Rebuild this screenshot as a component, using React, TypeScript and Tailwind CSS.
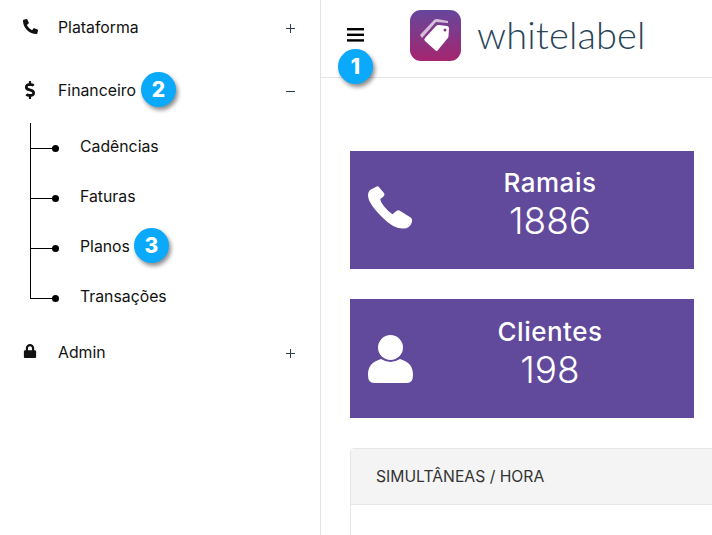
import { FaDollarSign, FaLock, FaPhoneAlt } from "react-icons/fa";
import { ReactNode } from "react";

function Badge({ n, className }: { n: number; className: string }) {
  return (
    <span
      className={`absolute flex h-[35px] w-[35px] items-center justify-center rounded-full bg-[#0aa9fb] text-[21px] font-extrabold text-white shadow-[2px_3px_4px_rgba(0,0,0,0.45)] ${className}`}
    >
      {n}
    </span>
  );
}

function MenuRow({ icon, label, open, children }: { icon: ReactNode; label: string; open?: boolean; children?: ReactNode }) {
  return (
    <div className="relative flex h-[54px] items-center text-[15.8px] text-[#111]">
      <span className="-mr-[2px] flex w-[60px] justify-center">{icon}</span>
      <span className="pt-[2px]">{label}</span>
      {children}
      <svg width="9" height="9" viewBox="0 0 9 9" className="absolute left-[286px] top-[24px]" stroke="#2b3a55" strokeWidth="1">
        <path d="M0 4.500 H9" />
        {!open && <path d="M4.500 0 V9" />}
      </svg>
    </div>
  );
}

function SubItem({ label, last, children }: { label: string; last?: boolean; children?: ReactNode }) {
  return (
    <div className="relative flex h-[50px] items-center pb-[2px] pl-[80px] text-[15.8px] text-[#111]">
      <span className={`absolute left-[30px] top-0 w-px bg-black ${last ? "h-[26px]" : "h-full"}`} />
      <span className="absolute left-[30px] top-[25px] h-px w-[25px] bg-black" />
      <span className="absolute left-[52px] top-[22px] h-[7px] w-[7px] rounded-full bg-black" />
      {label}
      {children}
    </div>
  );
}

function StatCard({ icon, title, value, tall }: { icon: ReactNode; title: string; value: string; tall?: boolean }) {
  return (
    <div className={`flex w-[344px] items-center bg-[#61499b] pl-[18px] pr-[7px] text-white ${tall ? "h-[119px]" : "h-[118px]"}`}>
      <span className="flex h-[45px] w-[45px] shrink-0 items-center justify-center">{icon}</span>
      <div className="flex-1 pb-[6px] text-center">
        <div className="text-[26px] font-medium leading-[28px] tracking-[0.5px]">{title}</div>
        <div className="text-[37px] font-light leading-[48px]">{value}</div>
      </div>
    </div>
  );
}

export default function App() {
  return (
    <div className="flex h-[535px] w-[712px] overflow-hidden bg-white font-['Inter','Liberation_Sans',sans-serif]">
      <aside className="w-[321px] shrink-0 border-r border-[#e4e4e4]">
        <MenuRow icon={<FaPhoneAlt size={15} className="-mt-[2px] text-[#111]" />} label="Plataforma" />
        <div className="mt-[9px]">
          <MenuRow icon={<FaDollarSign size={18} className="text-[#111]" />} label="Financeiro" open>
            <Badge n={2} className="left-[141px] top-[9px]" />
          </MenuRow>
        </div>
        <div className="mt-[6px]">
          <SubItem label="Cadências" />
          <SubItem label="Faturas" />
          <SubItem label="Planos">
            <Badge n={3} className="left-[134px] top-[5px]" />
          </SubItem>
          <SubItem label="Transações" last />
        </div>
        <div className="mt-[2px]">
          <MenuRow icon={<FaLock size={14} className="-mt-[2px] text-[#111]" />} label="Admin" />
        </div>
      </aside>

      <main className="min-w-0 flex-1">
        <header className="relative flex h-[78px] items-start border-b border-[#e6e6e6] pl-[26px]">
          <svg width="18" height="14" viewBox="0 0 18 14" className="mt-[28px]">
            <rect x="0" y="0" width="17" height="2.4" fill="#000" />
            <rect x="0" y="5.6" width="17" height="2.4" fill="#000" />
            <rect x="0" y="11.2" width="17" height="2.4" fill="#000" />
          </svg>
          <Badge n={1} className="left-[17px] top-[49px]" />
          <svg width="52" height="52" viewBox="0 0 52 52" className="ml-[45px] mt-[10px]">
            <defs>
              <linearGradient id="tile" x1="0" y1="0" x2="0" y2="1">
                <stop offset="0" stopColor="#66479c" />
                <stop offset="1" stopColor="#a5256f" />
              </linearGradient>
            </defs>
            <rect width="51" height="51" rx="11" fill="url(#tile)" />
            <path d="M10 25 L24 10 Q25 9 27 9 L38 11 L38 13 L26 12 L12 28 Z" fill="#e8d6ea" opacity="0.85" />
            <path d="M15 28 L26 16 Q27 15 29 15 L37 16 Q39 16.500 39 18 L38.500 26 Q38.500 28 37 29 L28 40 Q26.500 42 25 40 L15 31 Q13.500 29.500 15 28 Z" fill="#fff" />
            <circle cx="35" cy="20" r="1.5" fill="#8a3487" />
          </svg>
          <span className="ml-[15px] mt-[9px] font-['Lato',sans-serif] text-[38px] font-light leading-[50px] tracking-[0.15px] text-[#2a4458]">
            whitelabel
          </span>
        </header>

        <div className="flex flex-col gap-[30px] pl-[29px] pt-[73px]">
          <StatCard
            icon={
              <svg width="46" height="45" viewBox="0 0 46 45" fill="#fff" className="-mt-[6px]">
                <path d="M3 4 L9 1 Q10.500 0.500 11.500 2 L16.500 8 Q17.500 9.500 16 11 L12.500 14 Q13 17 17 22 Q21 27 25 29.500 L29 26 Q31 24.500 33 26 L44 33 Q45.500 34.500 45 37 Q43 44 36 44 Q26 44.500 14 32 Q0 18 0 10 Q0 6 3 4 Z" />
              </svg>
            }
            title="Ramais"
            value="1886"
          />
          <StatCard
            tall
            icon={
              <svg width="45" height="48" viewBox="0 0 45 48" fill="#fff">
                <circle cx="22.500" cy="12.500" r="12.500" />
                <path d="M0 40 C0 31 4 27 13 24 Q22.500 30 32 24 C41 27 45 31 45 40 Q45 48 39 48 L6 48 Q0 48 0 40 Z" />
              </svg>
            }
            title="Clientes"
            value="198"
          />
          <section className="h-[120px] w-[420px] rounded-t-[4px] border border-[#e6e6e6]">
            <div className="flex h-[56px] items-center border-b border-[#e6e6e6] bg-[#f4f4f4] pl-[25px] pt-[1px] text-[15.7px] text-[#333]">
              SIMULTÂNEAS / HORA
            </div>
          </section>
        </div>
      </main>
    </div>
  );
}
